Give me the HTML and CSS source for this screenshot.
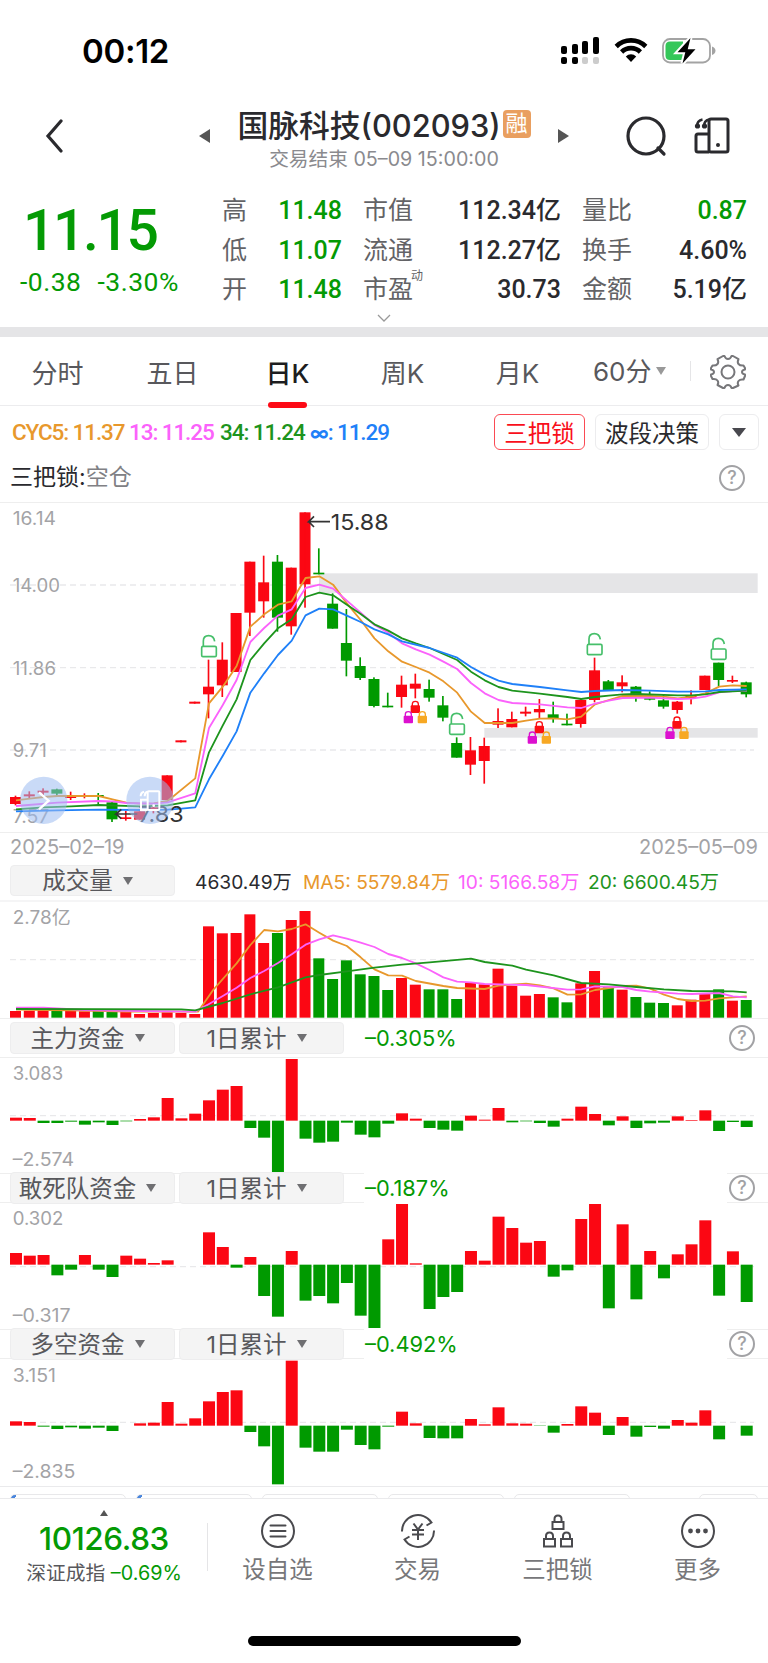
FILE: index.html
```html
<!DOCTYPE html>
<html lang="zh-CN">
<head>
  <meta charset="UTF-8">
  <title>国脉科技(002093)</title>
  <link rel="stylesheet" href="styles.css">
</head>
<body>
  <div class="status">
    <span class="time">00:12</span>
    <svg class="signal" width="40" height="28" viewBox="0 0 40 28">
      <g fill="#000">
        <rect x="1" y="9" width="6" height="8" rx="2"/><rect x="12" y="7" width="6" height="10" rx="2"/>
        <rect x="22" y="4" width="6" height="13" rx="2"/><rect x="33" y="0" width="6" height="17" rx="2"/>
        <rect x="1" y="20" width="6" height="7" rx="2"/><rect x="12" y="20" width="6" height="7" rx="2"/>
      </g>
      <g fill="#ccc"><rect x="22" y="20" width="6" height="7" rx="2"/><rect x="33" y="20" width="6" height="7" rx="2"/></g>
    </svg>
    <svg class="wifi" width="34" height="26" viewBox="0 0 34 26">
      <g fill="none" stroke="#000" stroke-width="4.6">
        <path d="M2.2 9.5a21 21 0 0 1 29.6 0"/><path d="M7.6 15a13.3 13.3 0 0 1 18.8 0"/>
      </g>
      <path d="M17 25l-5.2-5.6a7.4 7.4 0 0 1 10.4 0z"/>
    </svg>
    <svg class="battery" width="54" height="28" viewBox="0 0 54 28">
      <rect x="1" y="2" width="47" height="23.5" rx="7" fill="none" stroke="#a3a3a3" stroke-width="1.8"/>
      <path d="M50 9.5q3.5 1.5 3.5 4.2T50 18z" fill="#a3a3a3"/>
      <path d="M8 4.5h13v18.500H8q-4.500 0-4.500-4.500V9Q3.500 4.500 8 4.500z" fill="#34c759"/>
      <path d="M28.500 1L15.500 15.200h7.800L20.500 26.500l13-14.200h-7.800z" fill="#000" stroke="#fff" stroke-width="4" paint-order="stroke"/>
    </svg>
  </div>

  <div class="header">
    <svg class="back" width="18" height="34" viewBox="0 0 18 34"><path d="M16 2L3 17l13 15" fill="none" stroke="#2a2a2e" stroke-width="3.200" stroke-linecap="round"/></svg>
    <svg class="prev" width="11" height="14" viewBox="0 0 11 14"><path d="M11 0v14L0 7z" fill="#555"/></svg>
    <div class="title">
      <div class="name"><span>国脉科技(002093)</span><em>融</em></div>
      <div class="sub">交易结束 05–09 15:00:00</div>
    </div>
    <svg class="next" width="11" height="14" viewBox="0 0 11 14"><path d="M0 0v14l11-7z" fill="#555"/></svg>
    <svg class="search" width="42" height="42" viewBox="0 0 42 42"><g fill="none" stroke="#2a2a2e" stroke-width="3.200"><circle cx="21" cy="21" r="18"/><path d="M33 33l6 6" stroke-linecap="round"/></g></svg>
    <svg class="device" width="36" height="37" viewBox="0 0 36 37">
      <g fill="none" stroke="#2a2a2e" stroke-width="3"><rect x="15" y="2" width="19" height="33" rx="2"/><path d="M15 17H4q-2 0-2 2v14q0 2 2 2h11"/><path d="M8.500 2.500Q3 3.500 3 9.500M15 2.500Q10 3.500 10 9.500" stroke-width="2.600"/></g>
      <circle cx="3.500" cy="9" r="2.600" fill="#2a2a2e"/><circle cx="10.500" cy="9" r="2.600" fill="#2a2a2e"/>
      <circle cx="24" cy="28" r="2" fill="#2a2a2e"/>
    </svg>
  </div>

  <div class="quote">
    <div class="last">
      <div class="price">11.15</div>
      <div class="change"><span>-0.38</span><span>-3.30%</span></div>
    </div>
    <div class="stats">
      <span>高</span><b class="down">11.48</b><span>市值</span><b>112.34亿</b><span>量比</span><b class="down">0.87</b>
      <span>低</span><b class="down">11.07</b><span>流通</span><b>112.27亿</b><span>换手</span><b>4.60%</b>
      <span>开</span><b class="down">11.48</b><span>市盈<sup>动</sup></span><b>30.73</b><span>金额</span><b>5.19亿</b>
    </div>
    <svg class="more" width="14" height="8" viewBox="0 0 14 8"><path d="M1 1l6 6 6-6" fill="none" stroke="#999" stroke-width="1.300"/></svg>
  </div>

  <div class="tabs">
    <span>分时</span><span>五日</span><span class="active">日K</span><span>周K</span><span>月K</span>
    <span class="minute">60分<i class="tri"></i></span>
    <div class="gear">
      <svg width="36" height="36" viewBox="0 0 36 36"><g fill="none" stroke="#77777a" stroke-width="2" stroke-linejoin="round"><path d="M13 2h1.500q1 3 3.500 3t3.500-3H23l5.500 3.200q-1.500 3 0 4.800t5 1.500L35 14v1.500q-3 .5-3 2.500t3 2.500V22l-1.500 3.500q-3.500-.5-5 1.500t0 4.500L23 34h-1.500q-1-3-3.500-3t-3.500 3H13l-5.500-3q1.500-2.500 0-4.500t-5-1.500L1 22v-1.500q3-.5 3-2.500t-3-2.500V14l1.500-2.500q3.500.3 5-1.500t0-4.800z"/><circle cx="18" cy="18" r="6.500"/></g></svg>
    </div>
  </div>

  <div class="cyc">
    <span class="o">CYC5: 11.37</span><span class="m">13: 11.25</span><span class="g">34: 11.24</span><span class="b"><small>∞</small>: 11.29</span>
    <button class="on">三把锁</button><button class="wave">波段决策</button><button class="drop"><i class="tri"></i></button>
  </div>
  <div class="lockrow"><span>三把锁:</span><span class="empty">空仓</span><i class="help">?</i></div>

  <svg class="chart" id="kline" height="329" viewBox="0 9 2304 987"></svg>
  <div class="dates"><span>2025–02–19</span><span>2025–05–09</span></div>

  <div class="vol">
    <button class="sel">成交量<i class="tri"></i></button>
    <span class="v0">4630.49万</span><span class="v1 o">MA5: 5579.84万</span><span class="v2 m">10: 5166.58万</span><span class="g">20: 6600.45万</span>
  </div>
  <svg class="chart" id="volume" height="116" viewBox="0 216 2304 348"></svg>

  <div class="flow first">
    <button class="sel">主力资金<i class="tri"></i></button><button class="sel">1日累计<i class="tri"></i></button>
    <span class="val">–0.305%</span><i class="help">?</i>
  </div>
  <svg class="chart" id="flow1" height="115" viewBox="0 24 2304 345"></svg>

  <div class="flow">
    <button class="sel">敢死队资金<i class="tri"></i></button><button class="sel">1日累计<i class="tri"></i></button>
    <span class="val">–0.187%</span><i class="help">?</i>
  </div>
  <svg class="chart" id="flow2" height="126" viewBox="0 459 2304 378"></svg>

  <div class="flow">
    <button class="sel">多空资金<i class="tri"></i></button><button class="sel">1日累计<i class="tri"></i></button>
    <span class="val">–0.492%</span><i class="help">?</i>
  </div>
  <svg class="chart" id="flow3" height="127" viewBox="0 117 2304 381"></svg>

  <div class="cards"><i class="mark"></i><i class="mark"></i><i></i><i></i><i></i><i class="short"></i></div>

  <div class="nav">
    <div class="index">
      <i class="up"></i>
      <strong>10126.83</strong>
      <p>深证成指 <span>–0.69%</span></p>
    </div>
    <div class="item">
      <svg width="36" height="36" viewBox="0 0 36 36"><g fill="none" stroke="#4a4a4e" stroke-width="2"><circle cx="18" cy="18" r="16"/><path d="M10.500 12.500h15M10.500 18h15M10.500 23.500h15" stroke-linecap="round"/></g></svg>
      <span>设自选</span>
    </div>
    <div class="item">
      <svg width="36" height="36" viewBox="0 0 36 36"><g fill="none" stroke="#4a4a4e" stroke-width="2"><path d="M2 18.500A16 16 0 0 1 31.500 9.500l-5 3M34 17.500A16 16 0 0 1 4.500 26.500l5-3"/><path d="M13.500 10.500l4.500 6 4.500-6M12 17h12M12 21.500h12M18 17v10"/></g></svg>
      <span>交易</span>
    </div>
    <div class="item">
      <svg width="36" height="36" viewBox="0 0 36 36"><g fill="none" stroke="#4a4a4e" stroke-width="2"><rect x="12.500" y="9" width="11" height="7"/><path d="M14.500 9V6q0-3.500 3.500-3.500T21.500 6v3"/><rect x="4" y="26" width="11" height="7.500"/><path d="M6 26v-3q0-3.500 3.500-3.500T13 23v3"/><rect x="21" y="26" width="11" height="7.500"/><path d="M23 26v-3q0-3.500 3.500-3.500T30 23v3"/></g></svg>
      <span>三把锁</span>
    </div>
    <div class="item">
      <svg width="36" height="36" viewBox="0 0 36 36"><circle cx="18" cy="18" r="16" fill="none" stroke="#4a4a4e" stroke-width="2"/><g fill="#4a4a4e"><circle cx="10.500" cy="18" r="2.400"/><circle cx="18" cy="18" r="2.400"/><circle cx="25.500" cy="18" r="2.400"/></g></svg>
      <span>更多</span>
    </div>
  </div>
  <div class="home"></div>

  <script src="charts.js"></script>
</body>
</html>
```
FILE: styles.css
```css
* { box-sizing: border-box; }
body { margin: 0; width: 768px; height: 1663px; overflow: hidden; background: #fff; color: #2a2a2e; font-family: Inter, "Noto Sans CJK SC", sans-serif; }
svg { display: block; flex: none; }
i, em { font-style: normal; }
button { font-family: inherit; padding: 0; display: flex; align-items: center; justify-content: center; flex: none; }
.tri { border: 5.5px solid transparent; border-top: 8px solid #6f6f72; border-bottom: 0; }
.o { color: #e8982c; }
.m { color: #fb62fb; }
.g { color: #1d941d; }
.b { color: #1f80f8; }
.down { color: #049a04; }

.status { height: 100px; display: flex; padding-top: 37px; }
.time { width: 478px; margin-left: 82px; font-size: 33px; font-weight: 600; line-height: 28px; letter-spacing: -0.3px; color: #000; }
.wifi { margin-left: 14px; }
.battery { margin-left: 14px; }

.header { height: 90px; display: flex; align-items: flex-start; }
.back { margin: 19px 0 0 45px; }
.prev { margin: 29px 0 0 136px; }
.title { width: 348px; display: flex; flex-direction: column; align-items: center; }
.name { display: flex; align-items: center; height: 49px; margin-top: -1px; font-size: 30.8px; font-weight: 500; white-space: nowrap; }
.name em { width: 28px; height: 28px; line-height: 27px; border-radius: 4px; background: #e99f60; color: #fff; font-size: 22px; font-weight: 400; text-align: center; margin-left: 2px; }
.sub { font-size: 19.7px; line-height: 22px; color: #8a8a8e; white-space: nowrap; }
.next { margin: 29px 0 0 0; }
.search { margin: 15px 0 0 56px; }
.device { margin: 17px 0 0 27px; }

.quote { height: 137px; display: grid; grid-template-columns: 222px 525px; grid-template-rows: 122px 15px; }
.last { color: #049a04; font-family: Roboto, sans-serif; padding-top: 11px; }
.price { font-size: 57px; line-height: 60px; font-weight: 500; letter-spacing: -2.4px; padding-left: 23px; }
.change { display: flex; gap: 16px; padding: 5px 0 0 20px; font-size: 26.5px; line-height: 32px; letter-spacing: 0.5px; }
.stats { display: grid; grid-template-columns: 51px 69px 90px 129px 92px 94px; grid-template-rows: repeat(3, 39.500px); align-items: center; font-size: 25px; padding-top: 1px; }
.stats span { color: #636366; padding-left: 21px; white-space: nowrap; line-height: 39px; }
.stats span:nth-child(6n+1) { padding-left: 0; }
.stats b { font-family: Roboto, "Noto Sans CJK SC", sans-serif; font-weight: 500; text-align: right; line-height: 39px; }
.stats sup { font-size: 12px; line-height: 0; vertical-align: 18px; margin-left: -2px; }
.more { grid-column: 1 / 3; margin: 2px 0 0 377px; }

.tabs { height: 79px; border-top: 10px solid #e5e5e7; border-bottom: 1px solid #ececee; display: flex; font-size: 26px; line-height: 73px; color: #58585c; }
.tabs span { width: 115px; height: 68px; text-align: center; }
.tabs .active { color: #1d1d20; font-weight: 500; position: relative; }
/* underline sits over the tab bar's border */
.tabs .active::after { content: ""; position: absolute; left: 38px; bottom: -3px; width: 39px; height: 6px; border-radius: 3px; background: #fd0a16; }
.tabs .minute { display: flex; align-items: center; padding-left: 18px; gap: 4px; }
.minute .tri { border-top-color: #999; border-width: 8px 5.500px 0; }
.gear { width: 78px; display: flex; align-items: center; padding: 2px 0 0 20px; background: linear-gradient(#e5e5e7, #e5e5e7) left center / 1px 20px no-repeat; }

.cyc { height: 49px; display: flex; align-items: center; padding: 3px 0 0 12px; font-family: Roboto, "Noto Sans CJK SC", sans-serif; font-size: 22.500px; font-weight: 500; letter-spacing: -1.1px; white-space: nowrap; }
.cyc .o { width: 117px; }
.cyc .m { width: 91px; }
.cyc .g { width: 90px; }
.cyc .b { width: 184px; }
.cyc small { font-family: Inter, sans-serif; font-size: 19px; font-weight: 700; letter-spacing: -1px; }
.cyc button { height: 36px; border: 1px solid #ececee; border-radius: 6px; background: #fff; font-size: 23.500px; color: #2a2a2e; }
.cyc .on { width: 91px; border-color: #fb4a54; color: #f90f1b; }
.cyc .wave { width: 114px; margin: 0 10px; }
.cyc .drop { width: 40px; }
.drop .tri { border-width: 9px 7px 0; border-top-color: #48484e; }

.lockrow { height: 48px; border-bottom: 1px solid #eee; display: flex; align-items: center; font-size: 23px; line-height: 44px; padding: 0 0 3px 10px; }
.lockrow .empty { color: #808084; }
.help { width: 26px; height: 26px; border: 2px solid #a2a2a5; border-radius: 50%; color: #a2a2a5; font-size: 18px; font-weight: 500; line-height: 22px; text-align: center; flex: none; }
.lockrow .help { margin: 2px 23px 0 auto; }

.chart { width: 768px; overflow: visible; }
.chart text { font-size: 54px; fill: #a3a3a6; }
.chart .tip { font-size: 66px; fill: #333; }
.dates { height: 29px; border-top: 1px solid #eee; display: flex; justify-content: space-between; padding: 0 10px; font-size: 20px; line-height: 28px; color: #a3a3a6; }

.vol { height: 41px; border-bottom: 2px solid #f5f5f6; display: flex; align-items: center; padding-left: 10px; font-size: 19.2px; white-space: nowrap; }
.sel { width: 165px; height: 31px; border: 1px solid #ededee; border-radius: 4px; background: #f4f4f4; color: #58585c; font-size: 23.500px; line-height: 29px; gap: 10px; padding-right: 10px; }
.v0 { width: 108px; margin-left: 20px; }
.v1 { width: 155px; }
.v2 { width: 130px; }

.flow { height: 30px; border-top: 1px solid #eee; border-bottom: 1px solid #eee; display: flex; align-items: center; padding-left: 10px; }
.flow.first { height: 40px; }
.flow .sel { margin: -1px 4px -1px 0; height: 32px; position: relative; }
.flow .sel + .sel { margin-right: 20px; }
.val { width: 363px; margin: -1px 0; line-height: 30px; padding-left: 1px; background: #fff; color: #049a04; font-size: 21.8px; }
.flow .help { margin-left: 2px; }

.cards { height: 12px; border-top: 1px solid #eaeaec; padding: 7px 0 0 10px; display: flex; gap: 10px; overflow: hidden; }
.cards i { width: 116px; height: 20px; border: 1px solid #e8e8ea; border-radius: 5px; flex: none; }
.cards .mark { background: linear-gradient(120deg, #4a86dd 5px, #fff 5px); }
.cards .short { width: 59px; margin-left: 59px; }

.nav { height: 138px; border-top: 1px solid #eaeaec; display: flex; }
.index { width: 208px; padding-top: 11px; display: flex; flex-direction: column; align-items: center; background: linear-gradient(#e5e5e7, #e5e5e7) right 24px / 1px 48px no-repeat; }
.up { border: 4px solid transparent; border-bottom: 6px solid #555; border-top: 0; }
.index strong { font-size: 31.5px; font-weight: 500; line-height: 36px; margin-top: 5px; color: #049a04; letter-spacing: -0.4px; }
.index p { margin: 3px 0 0; font-size: 19.8px; line-height: 26px; color: #58585c; white-space: nowrap; }
.index p span { color: #049a04; }
.item { width: 140px; display: flex; flex-direction: column; align-items: center; padding: 14px 1px 0 0; font-size: 23.5px; line-height: 41px; color: #77777a; }
.home { width: 273px; height: 10px; border-radius: 5px; background: #000; margin-left: 248px; }
```
FILE: charts.js
```js
// All charts are drawn at 3 units per CSS pixel
const RED = "#fb0713", GREEN = "#009a00";
const LEFT = 30, STEP = 41.36;
const COLORS = { o: "#e8982c", m: "#fb62fb", g: "#1d941d", b: "#1f80f8" };

function rect(x, y, w, h, fill) {
  return `<rect x="${x}" y="${y}" width="${w}" height="${h}" fill="${fill}"/>`;
}

function text(x, y, str, width, cls = "") {
  return `<text x="${x}" y="${y}" class="${cls}" textLength="${width}" lengthAdjust="spacingAndGlyphs">${str}</text>`;
}

function dash(y) {
  return `<path d="M30 ${y}H2262" stroke="#e9e9eb" stroke-width="4" stroke-dasharray="18 12"/>`;
}

// points: [bar index, y] pairs
function line(color, points) {
  const pts = points.map(([i, y]) => `${(48 + i * STEP).toFixed(1)},${y}`).join(" ");
  return `<polyline points="${pts}" fill="none" stroke="${COLORS[color]}" stroke-width="5.5" stroke-linejoin="round"/>`;
}

function openLock(x, y) {
  return `<g fill="none" stroke="#46bf6a" stroke-width="5"><rect x="${x - 21}" y="${y}" width="44" height="31" rx="4" fill="#fff"/>
    <path d="M${x - 16} ${y}v-16q0-16 16-16 15 0 18 17"/></g>`;
}

function closedLock(x, y, color) {
  return `<rect x="${x - 14}" y="${y + 14}" width="28" height="23" rx="3" fill="${color}"/>
    <path d="M${x - 9} ${y + 16}v-6q0-8 9-8t9 8v6" fill="none" stroke="${color}" stroke-width="4"/>`;
}

// body top, body bottom, high, low, up(1) / down(0)
const candles = [
  [891,912,887,916,1],[883,889,874,895,1],[872,878,865,885,1],[868,881,866,888,0],[888,894,875,900,1],[885,889,880,895,1],
  [885,891,879,914,0],[907,958,905,966,0],[952,957,933,962,1],[934,959,934,959,1],[922,927,916,940,1],[826,900,826,900,1],
  [721,727,721,727,1],[605,611,605,611,1],[560,583,479,655,1],[479,556,427,591,1],[339,516,339,516,1],[185,338,185,408,1],
  [247,304,167,353,1],[185,353,165,395,0],[203,379,203,404,1],[37,253,37,323,1],[218,223,145,223,0],[311,386,280,386,0],
  [429,482,327,529,0],[498,534,472,540,0],[537,618,532,622,0],[617,622,578,622,0],[554,591,527,623,1],[551,566,521,595,1],
  [567,593,539,605,0],[616,653,588,664,0],[729,773,712,773,0],[751,794,711,825,1],[738,783,713,851,1],[663,674,625,684,1],
  [657,682,635,682,1],[635,641,620,649,1],[627,637,597,655,1],[643,654,605,668,0],[671,676,641,676,0],[600,672,595,683,1],
  [511,600,473,607,1],[544,570,540,572,0],[547,559,526,577,1],[560,586,558,605,0],[594,599,574,601,0],[601,620,582,626,0],
  [605,630,603,641,1],[588,594,571,613,1],[527,570,527,570,1],[488,540,488,558,0],[540,545,527,549,1],[547,583,545,592,0]
];

let k = dash(255) + dash(503) + dash(750);
// open price gaps
k += rect(957, 220, 1316, 59, "#e5e5e7") + rect(1453, 684, 820, 29, "#e5e5e7");
k += text(38, 75, "16.14", 130) + text(38, 276, "14.00", 142) + text(38, 524, "11.86", 130) + text(38, 772, "9.71", 102) + text(38, 970, "7.57", 110);
candles.forEach(([top, bottom, high, low, up], i) => {
  const x = LEFT + i * STEP, c = up ? RED : GREEN;
  k += rect(x, top, 33, bottom - top, c) + rect(x + 14, high, 5, low - high, c);
});
k += line("o", [[0,901],[1,896],[2,891],[3,888],[6,888],[7,898],[8,908],[9,911],[10,910],[11,903],[13,835],[14,610],[15,560],[16,498],[17,380],[18,343],[19,314],[20,304],[21,234],[22,229],[23,254],[24,310],[25,360],[26,415],[27,454],[28,485],[29,501],[30,518],[31,544],[32,578],[33,635],[34,669],[36,669],[37,662],[38,656],[39,655],[40,658],[41,650],[42,613],[43,600],[44,588],[46,588],[47,590],[48,595],[49,590],[50,580],[51,560],[52,556],[53,558]]);
k += line("m", [[0,918],[3,908],[6,903],[7,904],[8,909],[10,911],[11,907],[13,880],[14,684],[15,615],[16,540],[17,426],[18,384],[19,347],[20,328],[21,264],[22,254],[23,266],[24,302],[25,338],[26,375],[27,398],[28,430],[29,448],[30,464],[31,485],[32,507],[33,549],[34,580],[35,600],[36,609],[38,613],[40,622],[41,624],[42,611],[43,602],[44,594],[46,593],[48,597],[49,596],[50,590],[51,577],[52,573],[53,573]]);
k += line("g", [[0,928],[2,922],[4,919],[6,915],[9,919],[11,916],[13,901],[14,757],[15,676],[16,598],[17,480],[18,430],[19,385],[20,358],[21,291],[22,278],[23,286],[24,314],[25,342],[26,373],[27,392],[28,415],[29,430],[30,444],[31,462],[32,480],[33,515],[34,541],[35,561],[36,572],[38,581],[40,591],[41,597],[42,591],[43,587],[44,583],[45,582],[48,586],[49,586],[50,583],[51,576],[52,574],[53,572]]);
k += line("b", [[0,934],[3,931],[6,929],[9,930],[11,929],[12,926],[13,922],[14,838],[15,767],[16,694],[17,578],[18,520],[19,465],[20,422],[21,346],[22,326],[23,328],[24,347],[25,366],[26,388],[27,403],[28,424],[30,444],[32,473],[33,501],[34,524],[35,542],[36,552],[38,561],[40,571],[41,576],[42,573],[44,570],[46,572],[48,575],[49,575],[50,574],[51,570],[53,568]]);
[[626,439],[1370,672],[1783,433],[2155,447]].forEach(([x, y]) => k += openLock(x, y));
[[1246,602],[1618,663],[2031,649]].forEach(([x, y]) => {
  k += closedLock(x, y, "#fb0f13") + closedLock(x - 21, y + 31, "#dc10cf") + closedLock(x + 21, y + 31, "#f7a823");
});
k += text(992, 89, "15.88", 174, "tip") + text(415, 965, "7.83", 136, "tip");
k += `<path d="M990 65h-64l16-16M926 65l16 16M412 942h-64l16-14M348 942l16 14" fill="none" stroke="#333" stroke-width="5"/>`;
// floating shortcuts over the chart
k += `<circle cx="131" cy="901" r="71" fill="#9dbcf0" fill-opacity=".55"/><path d="M117 877l29 25-29 26" fill="none" stroke="#fff" stroke-width="7"/>
  <circle cx="450" cy="901" r="71" fill="#9dbcf0" fill-opacity=".55"/>
  <g fill="none" stroke="#fff" stroke-width="6"><rect x="443" y="874" width="35" height="56" rx="3"/><path d="M443 899h-20v31h20M422 889q0-12 10-14M434 889q0-12 8-14"/></g><circle cx="461" cy="917" r="4" fill="#fff"/>`;
document.getElementById("kline").innerHTML = k;

// negative tops mark falling days
const volumes = [543,542,541,-541,543,544,-543,-544,545,552,549,547,549,552,289,310,309,253,339,-309,270,243,-385,-447,-391,-433,-438,-480,444,464,-478,-478,-507,459,463,416,468,497,492,-502,-517,460,423,-472,479,-501,-518,-519,526,509,490,-478,512,-510];
let v = dash(389) + text(38, 283, "2.78亿", 174);
volumes.forEach((t, i) => v += rect(LEFT + i * STEP, Math.abs(t), 33, 563 - Math.abs(t), t > 0 ? RED : GREEN));
v += line("o", [[0,539],[5,542],[8,545],[13.2,545],[14.3,480],[16,400],[17,345],[18,300],[19,304],[20,297],[21,283],[22,308],[23,332],[24,348],[25,382],[26,418],[27,436],[28,437],[29,453],[31,468],[32,474],[34,477],[35,467],[37,461],[38,466],[39,475],[40,494],[41,493],[42,480],[43,474],[44,468],[45,467],[46,476],[47,494],[48,507],[49,513],[50,512],[51,505],[52,502],[53,499]]);
v += line("m", [[0,533],[2,533],[5,540],[9,543],[13,545],[14,522],[15,498],[16,473],[17,444],[18,423],[19,399],[20,373],[21,344],[22,328],[23,316],[24,326],[25,338],[26,351],[27,372],[28,384],[29,400],[30,420],[31,442],[32,455],[33,457],[34,462],[37,465],[40,479],[41,478],[42,469],[44,471],[45,480],[46,485],[48,491],[49,492],[51,489],[52,499],[53,502]]);
v += line("g", [[0,537],[12,538],[13,541],[15,519],[17,493],[19,472],[21,442],[22,435],[24,424],[26,413],[28,404],[30,397],[33,386],[34,396],[36,407],[37,419],[39,436],[41,459],[43,463],[45,471],[47,478],[49,483],[52,484],[53,487]]);
document.getElementById("volume").innerHTML = v;

function drawFlow(id, base, mid, labels, values) {
  let s = dash(mid);
  labels.forEach(([y, str, w]) => s += text(38, y, str, w));
  values.forEach((n, i) => s += rect(LEFT + i * STEP, n > 0 ? base - n : base, 36, Math.abs(n), n > 0 ? RED : GREEN));
  document.getElementById(id).innerHTML = s;
}

drawFlow("flow1", 212, 197, [[91, "3.083", 152], [347, "–2.574", 184]],
  [9,8,-7,-7,-3,-12,-5,-13,-2,5,10,68,7,21,61,93,104,-22,-51,-154,185,-54,-66,-63,-6,-42,-50,-9,22,6,-22,-27,-30,15,3,38,-5,-2,-7,-18,6,42,20,-14,13,-22,-8,-6,13,2,31,-31,-4,-19]);
drawFlow("flow2", 644, 650, [[526, "0.302", 152], [815, "–0.317", 174]],
  [35,27,29,-32,-15,29,-15,-37,27,18,5,13,0,0,97,53,-9,23,-94,-156,41,-108,-94,-116,-55,-153,-190,76,182,4,-133,-97,-82,41,12,144,110,66,71,-36,-17,137,182,-131,121,-104,41,-41,31,61,133,-93,40,-112]);
drawFlow("flow3", 317, 307, [[185, "3.151", 130], [473, "–2.835", 188]],
  [13,11,-3,-10,-5,-9,-6,-16,0,7,9,71,6,22,73,101,106,-19,-62,-176,195,-66,-78,-78,-12,-58,-71,-3,42,7,-37,-38,-38,20,4,55,7,6,-1,-21,5,58,39,-28,26,-33,-4,-9,17,9,46,-41,0,-30]);
```
